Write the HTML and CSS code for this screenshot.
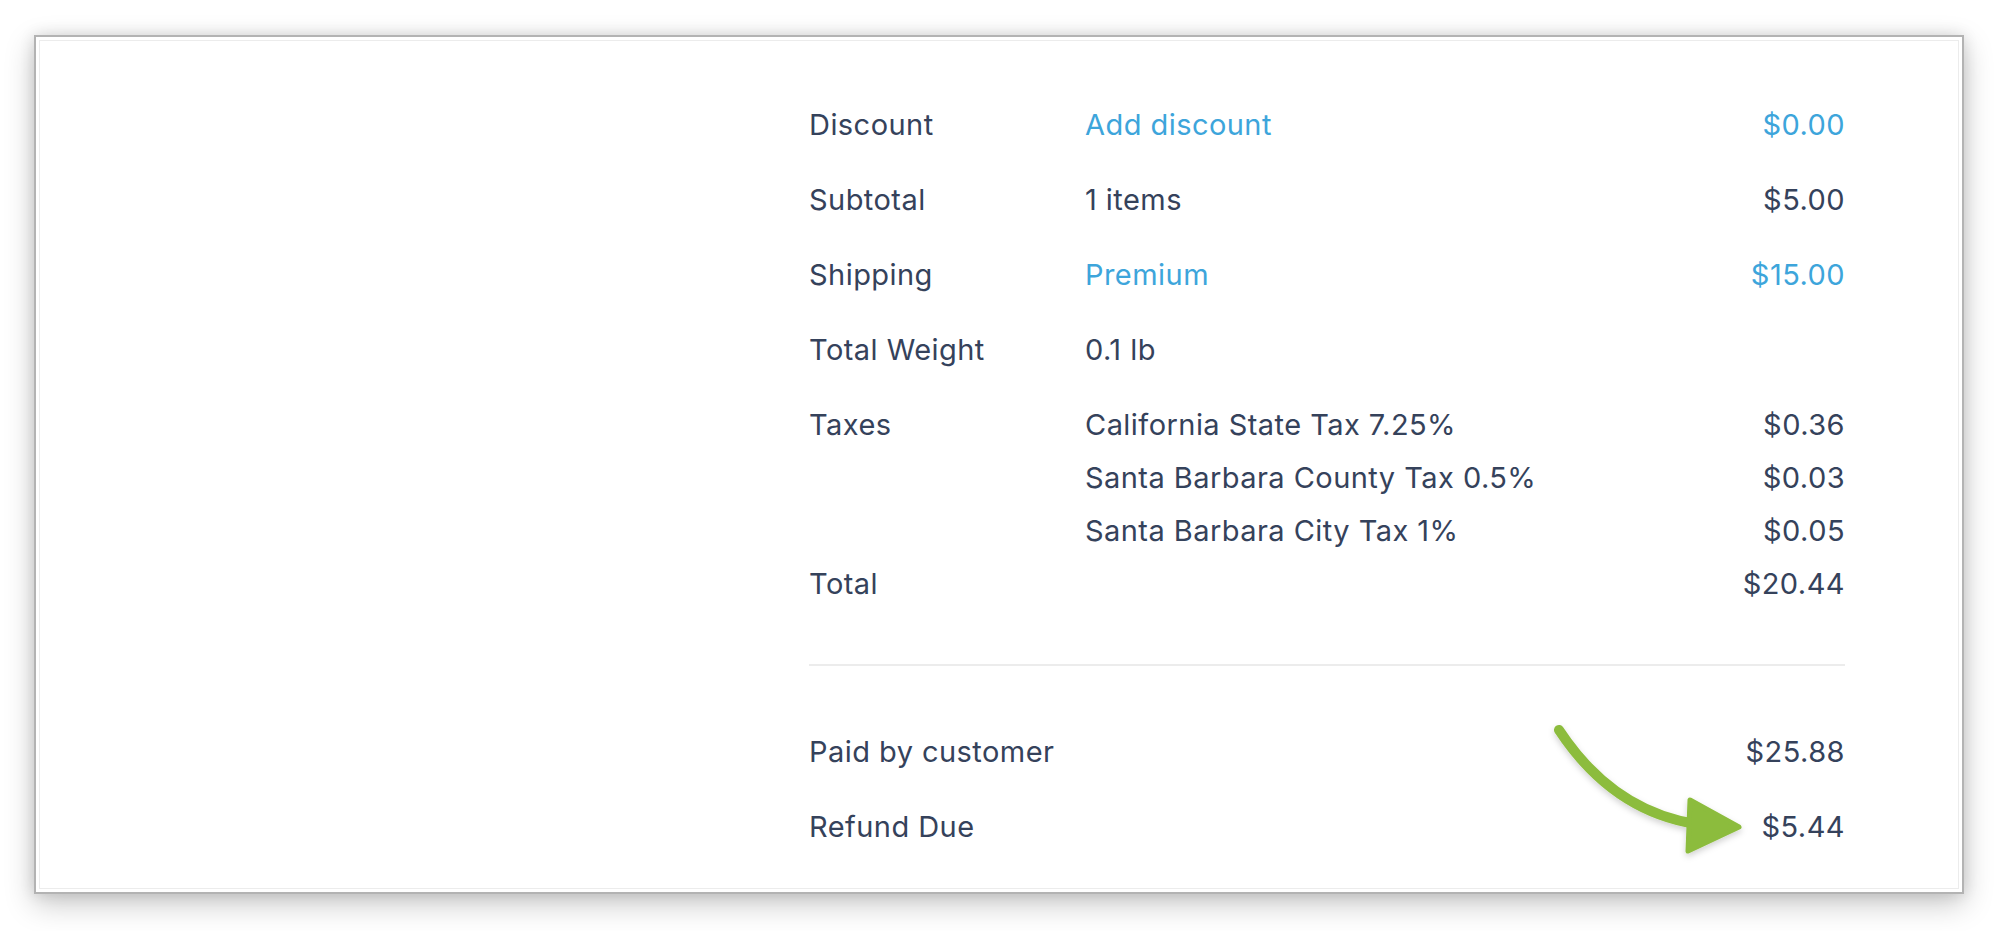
FILE: index.html
```html
<!DOCTYPE html>
<html lang="en">
<head>
<meta charset="utf-8">
<title>Order summary</title>
<link rel="stylesheet" href="styles.css">
</head>
<body>
<div class="page">
  <section class="card">
    <div class="spacer"></div>
    <div class="summary">
      <div class="row">
        <span class="label">Discount</span>
        <span class="desc link">Add discount</span>
        <span class="amount link">$0.00</span>
      </div>
      <div class="row">
        <span class="label">Subtotal</span>
        <span class="desc">1 items</span>
        <span class="amount">$5.00</span>
      </div>
      <div class="row">
        <span class="label">Shipping</span>
        <span class="desc link">Premium</span>
        <span class="amount link">$15.00</span>
      </div>
      <div class="row">
        <span class="label">Total Weight</span>
        <span class="desc">0.1 lb</span>
        <span class="amount"></span>
      </div>
      <div class="row taxes">
        <span class="label">Taxes</span>
        <span class="desc">California State Tax 7.25%</span>
        <span class="amount">$0.36</span>
        <span class="label"></span>
        <span class="desc">Santa Barbara County Tax 0.5%</span>
        <span class="amount">$0.03</span>
        <span class="label"></span>
        <span class="desc">Santa Barbara City Tax 1%</span>
        <span class="amount">$0.05</span>
      </div>
      <div class="row total">
        <span class="label">Total</span>
        <span class="desc"></span>
        <span class="amount">$20.44</span>
      </div>
      <hr class="divider">
      <div class="row">
        <span class="label">Paid by customer</span>
        <span class="desc"></span>
        <span class="amount">$25.88</span>
      </div>
      <div class="row">
        <span class="label">Refund Due</span>
        <span class="desc"></span>
        <span class="amount">$5.44</span>
      </div>
    </div>
  </section>
  <svg class="arrow" width="230" height="170" viewBox="0 0 230 170" aria-hidden="true">
    <defs>
      <filter id="sh" x="-20%" y="-20%" width="140%" height="140%">
        <feDropShadow dx="0" dy="3" stdDeviation="3" flood-color="#000" flood-opacity="0.18"/>
      </filter>
    </defs>
    <g filter="url(#sh)" fill="#8cbc3d" stroke="#8cbc3d">
      <path d="M19 20 C 48 64, 92 104, 156 114" fill="none" stroke-width="10" stroke-linecap="round"/>
      <polygon points="150,90 148,141 199,117" stroke-width="5" stroke-linejoin="round"/>
    </g>
  </svg>
</div>
</body>
</html>
```
FILE: styles.css
```css
html, body {
  margin: 0;
  padding: 0;
  background: #ffffff;
}

.page {
  position: relative;
  width: 2000px;
  height: 931px;
  padding: 35px 36px 0 34px;
  box-sizing: border-box;
}

.card {
  box-sizing: border-box;
  width: 1930px;
  height: 859px;
  background: #ffffff;
  border: 2px solid #b3b3b3;
  box-shadow:
    inset 0 0 0 3px #ffffff,
    inset 0 0 0 4px #ececec,
    0 10px 28px rgba(0, 0, 0, 0.22),
    0 0 14px rgba(0, 0, 0, 0.12);
  display: grid;
  grid-template-columns: 1fr 1036px;
  padding: 61px 117px 0 0;
  font-family: "Inter", "Noto Sans", "Liberation Sans", sans-serif;
  font-size: 29px;
  letter-spacing: 0.45px;
  color: #35425b;
}

.summary {
  display: flex;
  flex-direction: column;
  gap: 22px;
}

.row {
  display: grid;
  grid-template-columns: 276px 1fr auto;
  line-height: 53px;
  height: 53px;
}

.row.taxes {
  height: auto;
}

.row.total {
  margin-top: -22px;
}

.amount {
  text-align: right;
}

.link {
  color: #3da5db;
}

.divider {
  border: 0;
  height: 2px;
  background: #ececec;
  margin: 32px 0 37px 0;
  width: 100%;
}

.arrow {
  position: absolute;
  left: 1540px;
  top: 710px;
}
```
